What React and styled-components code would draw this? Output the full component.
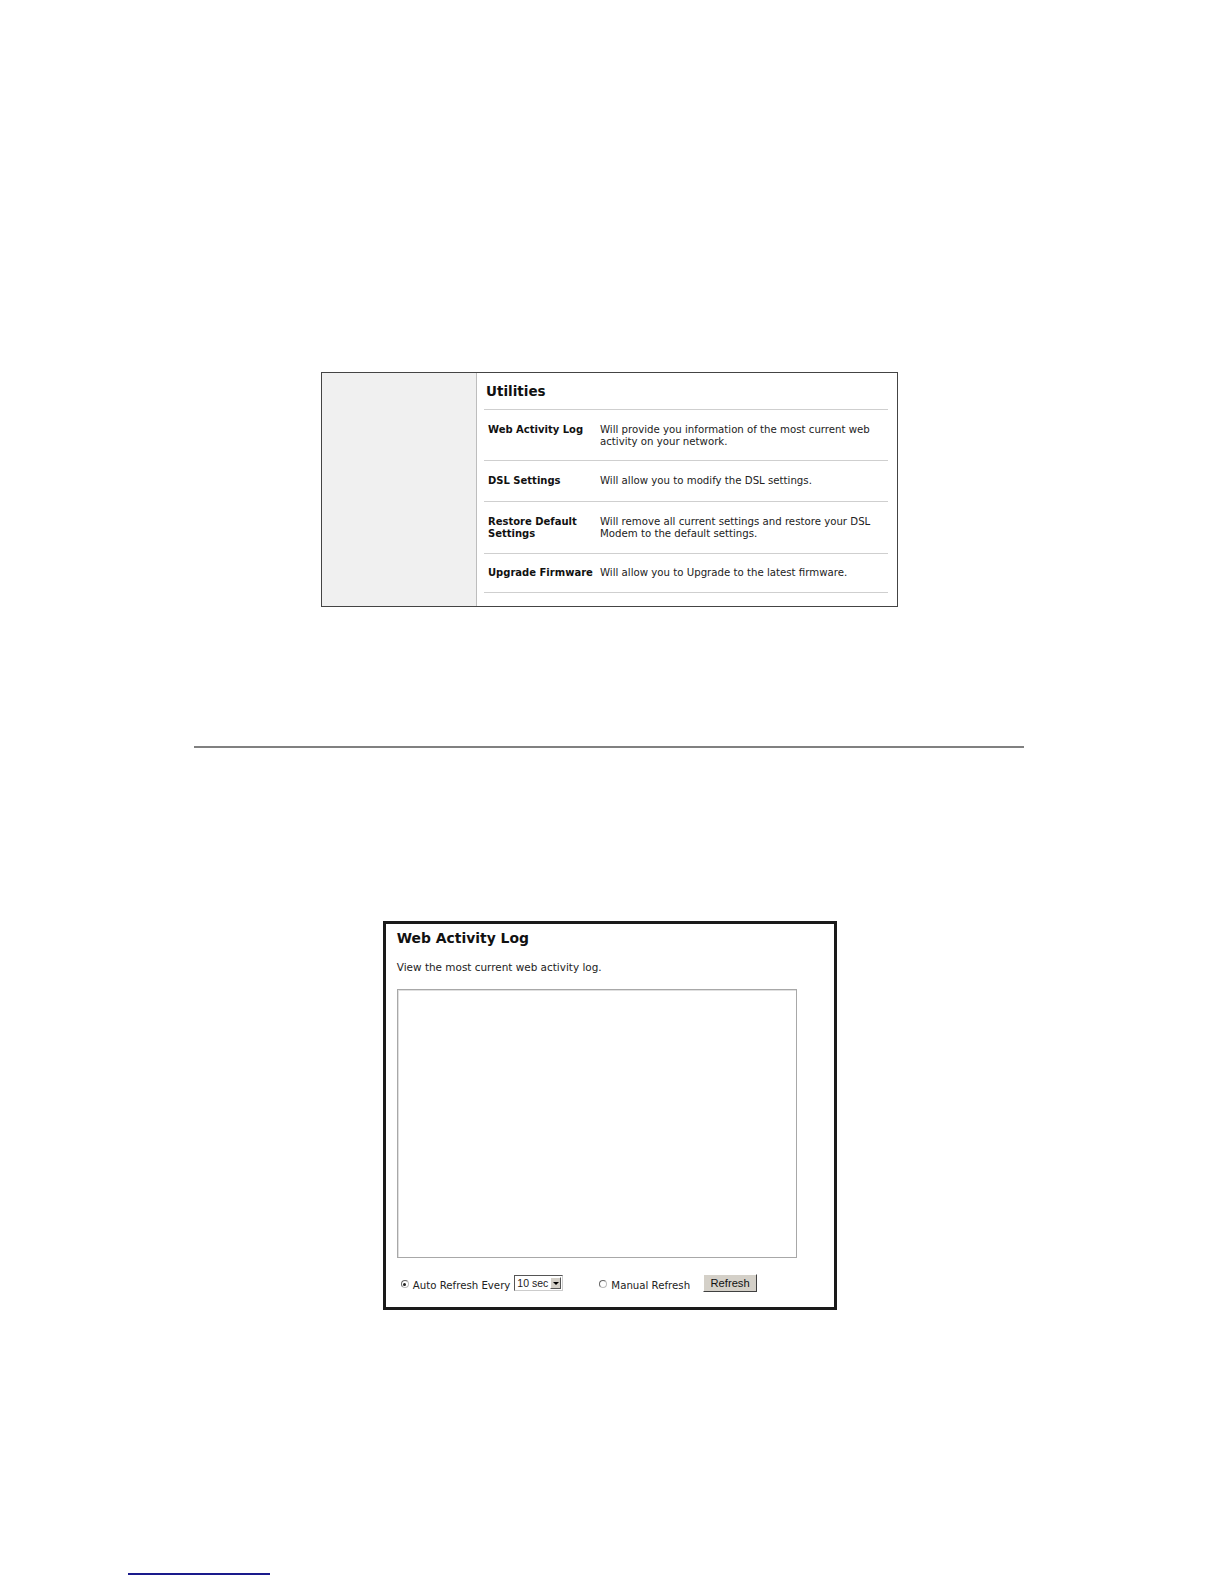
import React from "react";
import styled, { createGlobalStyle } from "styled-components";

const Global = createGlobalStyle`
  html, body { margin: 0; padding: 0; background: #fff; overflow: hidden; }
  body { font-family: "DejaVu Sans", Verdana, sans-serif; color: #111; }
`;

const Page = styled.div`
  display: flex;
  flex-direction: column;
  align-items: flex-start;
`;

const UtilPanel = styled.div`
  margin: 371.5px 0 0 321px;
  width: 577px;
  height: 235.5px;
  box-sizing: border-box;
  border: 1px solid #444;
  display: flex;
`;

const Sidebar = styled.div`
  width: 154px;
  flex: none;
  background: #f0f0f0;
  border-right: 1px solid #bdbdbd;
`;

const UtilContent = styled.div`
  flex: 1;
  padding: 0 9px 0 7px;
  display: flex;
  flex-direction: column;
`;

const UtilTitle = styled.div`
  font-weight: bold;
  font-size: 13.5px;
  height: 36.5px;
  line-height: 37px;
  padding-left: 2px;
  border-bottom: 1px solid #cfcfcf;
`;

const Row = styled.div`
  display: flex;
  padding: ${(p) => p.$pad};
  border-bottom: 1px solid #cfcfcf;
  font-size: 10.2px;
  line-height: 12.1px;
`;

const Label = styled.div`
  width: 116px;
  flex: none;
  padding-left: 4px;
  box-sizing: border-box;
  font-weight: bold;
  white-space: nowrap;
  font-size: 10px;
`;

const Desc = styled.div`
  flex: 1;
  color: #222;
  padding-right: 4px;
`;

const Rule = styled.div`
  margin: 139px 0 0 194px;
  width: 830px;
  height: 2px;
  background: #808080;
`;

const LogBox = styled.div`
  margin: 172.5px 0 0 382.5px;
  width: 454px;
  height: 389px;
  box-sizing: border-box;
  border: 3px solid #1a1a1a;
  padding: 4.2px 0 0 11.3px;
  display: flex;
  flex-direction: column;
`;

const LogTitle = styled.div`
  font-weight: bold;
  font-size: 13.9px;
  line-height: 20px;
`;

const LogSub = styled.div`
  font-size: 10.45px;
  line-height: 12px;
  margin-top: 13.3px;
  color: #222;
`;

const LogArea = styled.div`
  margin-top: 16.2px;
  width: 400px;
  height: 268.6px;
  box-sizing: border-box;
  border: 1px solid #a8a8a8;
  box-shadow: inset 1px 1px 0 #e0e0e0;
  background: #fff;
`;

const Controls = styled.div`
  display: flex;
  align-items: center;
  height: 20px;
  margin-top: 16px;
  padding-left: 4px;
  font-size: 10.2px;
  color: #222;
`;

const Radio = styled.span`
  width: 8px;
  height: 8px;
  box-sizing: border-box;
  border-radius: 50%;
  border: 1px solid;
  border-color: #666 #bbb #bbb #666;
  background: #fff;
  margin-right: 4px;
  margin-top: 1px;
  position: relative;
  flex: none;
  &::after {
    content: "";
    display: ${(p) => (p.$on ? "block" : "none")};
    position: absolute;
    left: 1.5px;
    top: 1.5px;
    width: 3px;
    height: 3px;
    border-radius: 50%;
    background: #222;
  }
`;

const CtlText = styled.span`
  margin-top: 3px;
  white-space: nowrap;
`;

const Select = styled.span`
  margin-left: 4px;
  width: 49px;
  height: 16px;
  box-sizing: border-box;
  border: 1px solid #555;
  border-right-color: #ccc;
  border-bottom-color: #ccc;
  display: flex;
  align-items: center;
  justify-content: space-between;
  font-family: "Liberation Sans", Arial, sans-serif;
  font-size: 10.5px;
  padding-left: 2px;
  background: #fff;
  margin-top: -1px;
  flex: none;
`;

const SelArrow = styled.span`
  width: 11px;
  height: 12px;
  margin-right: 1px;
  background: #d4d0c8;
  border: 1px solid;
  border-color: #fff #555 #555 #fff;
  box-sizing: border-box;
  display: flex;
  align-items: center;
  justify-content: center;
  &::after {
    content: "";
    border-left: 3px solid transparent;
    border-right: 3px solid transparent;
    border-top: 3px solid #000;
  }
`;

const Spacer = styled.span`
  width: ${(p) => p.$w}px;
  flex: none;
`;

const Button = styled.span`
  width: 54px;
  height: 18px;
  box-sizing: border-box;
  background: #d4d0c8;
  border: 1px solid;
  border-color: #fff #404040 #404040 #fff;
  display: flex;
  align-items: center;
  justify-content: center;
  font-family: "Liberation Sans", Arial, sans-serif;
  font-size: 11.2px;
  color: #111;
  margin-top: -2px;
  flex: none;
`;

const Footer = styled.div`
  margin: 263px 0 0 128px;
  width: 142px;
  height: 2px;
  background: #1a1a8c;
`;

const rows = [
  ["Web Activity Log", "Will provide you information of the most current web activity on your network.", "14px 0 12.3px"],
  ["DSL Settings", "Will allow you to modify the DSL settings.", "14px 0 13.3px"],
  ["Restore Default Settings", "Will remove all current settings and restore your DSL Modem to the default settings.", "14px 0 13.3px"],
  ["Upgrade Firmware", "Will allow you to Upgrade to the latest firmware.", "13px 0 12.3px"],
];

export default function App() {
  return (
    <>
      <Global />
      <Page>
        <UtilPanel>
          <Sidebar />
          <UtilContent>
            <UtilTitle>Utilities</UtilTitle>
            {rows.map(([l, d, p]) => (
              <Row key={l} $pad={p}>
                <Label>
                  {l === "Restore Default Settings" ? (
                    <>
                      Restore Default
                      <br />
                      Settings
                    </>
                  ) : (
                    l
                  )}
                </Label>
                <Desc>{d}</Desc>
              </Row>
            ))}
          </UtilContent>
        </UtilPanel>
        <Rule />
        <LogBox>
          <LogTitle>Web Activity Log</LogTitle>
          <LogSub>View the most current web activity log.</LogSub>
          <LogArea />
          <Controls>
            <Radio $on />
            <CtlText>Auto Refresh Every</CtlText>
            <Select>
              10 sec
              <SelArrow />
            </Select>
            <Spacer $w={36} />
            <Radio />
            <CtlText>Manual Refresh</CtlText>
            <Spacer $w={13} />
            <Button>Refresh</Button>
          </Controls>
        </LogBox>
        <Footer />
      </Page>
    </>
  );
}
